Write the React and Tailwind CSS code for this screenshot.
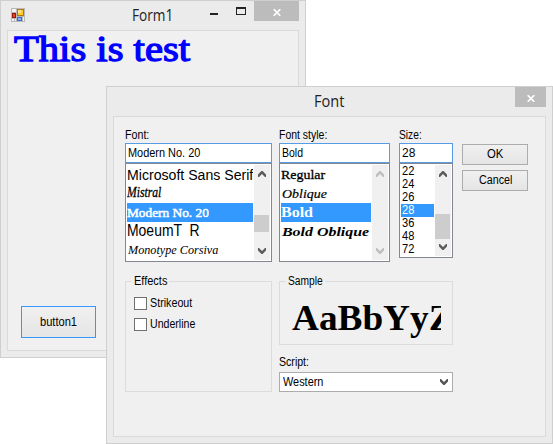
import { useLayoutEffect, useRef } from 'react';

// Text squeezed or stretched horizontally to an exact width.
function Fit({ w, className = '', children }) {
  const ref = useRef(null);
  useLayoutEffect(() => {
    const el = ref.current;
    el.style.transform = `scaleX(${w / el.offsetWidth})`;
  }, [w]);
  return (
    <span className="block overflow-visible whitespace-nowrap" style={{ width: w }}>
      <span ref={ref} className={`inline-block origin-left whitespace-pre align-top ${className}`}>{children}</span>
    </span>
  );
}

function Chevron({ up, color }) {
  return (
    <svg width="8" height="6" viewBox="0 0 8 6" className={up ? 'rotate-180' : ''}>
      <path d="M0 0 H1 L4 2.9 L7 0 H8 V2.6 L4.6 6 H3.4 L0 2.6 Z" fill={color} />
    </svg>
  );
}

function Close({ className }) {
  return (
    <div className={`flex h-5 items-center justify-center bg-[#bcbcbc] pt-[2px] ${className}`}>
      <svg width="8" height="7" viewBox="0 0 8 7">
        <path d="M0.7 0.2 L7.3 6.8 M7.3 0.2 L0.7 6.8" stroke="#fff" strokeWidth="1.7" />
      </svg>
    </div>
  );
}

function ScrollBar({ disabled, thumb }) {
  const c = disabled ? '#bfbfbf' : '#5c5c5c';
  return (
    <div className="flex w-4 shrink-0 flex-col items-start bg-[#f0f0f0]">
      <div className="flex h-[18px] w-4 items-center justify-center"><Chevron up color={c} /></div>
      <div className="w-[15px] flex-1">{thumb && <div className={`bg-[#cdcdcd] ${thumb}`} />}</div>
      <div className="flex h-[18px] w-4 items-center justify-center"><Chevron color={c} /></div>
    </div>
  );
}

function Field({ label, labelW, value, valueW, className, children }) {
  return (
    <div className={className}>
      <div className="h-[14px]"><Fit w={labelW}>{label}</Fit></div>
      <div className="h-5 border border-[#569de5] bg-white pt-[3px] pl-[2px]">
        <Fit w={valueW}>{value}</Fit>
      </div>
      {children}
    </div>
  );
}

function Row({ selected, w, className = '', pad = 'pl-0', children }) {
  return (
    <div className={`h-[19px] ${pad} ${selected ? 'bg-[#3399ff] text-white' : ''}`}>
      <Fit w={w} className={`h-[19px] ${className}`}>{children}</Fit>
    </div>
  );
}

function Group({ title, titleW, className, children }) {
  return (
    <div className={`relative border border-[#dcdcdc] ${className}`}>
      <div className="absolute -top-[7px] left-[6px] bg-[#f0f0f0] px-[2px]"><Fit w={titleW}>{title}</Fit></div>
      {children}
    </div>
  );
}

function Check({ label, w }) {
  return (
    <div className="flex h-[13px] items-center gap-[3px]">
      <div className="size-[13px] border border-[#707070] bg-white" />
      <Fit w={w}>{label}</Fit>
    </div>
  );
}

function Button({ label, w, className }) {
  return (
    <button className={`flex items-center justify-center border bg-linear-to-b from-[#f0f0f0] to-[#e5e5e5] ${className}`}>
      <Fit w={w}>{label}</Fit>
    </button>
  );
}

function FormIcon() {
  return (
    <svg width="14" height="14" viewBox="0 0 14 14" shapeRendering="crispEdges">
      <rect width="14" height="14" fill="#b9b9b9" />
      <path d="M1 1h4v3H1z M1 11h2v2H1z M4 11h1v2H4z M12 9h1v4h-1z" fill="#f3f3f3" />
      <rect x="1" y="5" width="4" height="5" fill="#9e1608" />
      <rect x="2" y="6" width="2" height="3" fill="#e8442c" />
      <rect x="6" y="1" width="7" height="7" fill="#b07a0c" />
      <rect x="7" y="2" width="5" height="5" fill="#ffc92e" />
      <rect x="7" y="2" width="3" height="3" fill="#ffe38a" />
      <rect x="6" y="9" width="5" height="4" fill="#356fc9" />
      <rect x="7" y="10" width="3" height="2" fill="#8ab5f5" />
    </svg>
  );
}

export default function App() {
  return (
    <div className="relative h-[444px] w-[553px] overflow-hidden bg-white font-['Liberation_Sans',Arial,sans-serif] text-[12px] leading-[13px] text-black">
      <section className="absolute top-0 left-0 flex h-[358px] w-[306px] flex-col border border-[#cfcfcf] bg-[#ebebeb] px-[6px] pb-[6px]">
        <header className="flex h-[29px] shrink-0 items-start">
          <div className="pt-[7px] pl-1"><FormIcon /></div>
          <div className="pt-[3px] pl-[107px]">
            <Fit w={41} className="font-['Open_Sans',sans-serif] text-[16px] leading-[22px] text-[#222]">Form1</Fit>
          </div>
          <div className="mt-[12px] ml-[37px] h-[2px] w-2 bg-[#222]" />
          <div className="mt-[6px] ml-[18px] h-2 w-[10px] border border-t-2 border-[#222]" />
          <Close className="ml-2 w-[45px]" />
        </header>
        <div className="flex flex-1 flex-col justify-between border border-[#dadada] bg-[#f0f0f0]">
          <div className="pl-[6px]">
            <Fit w={176} className="font-['Liberation_Serif',serif] text-[36px] leading-[37px] text-[#0000ff] [-webkit-text-stroke:1.3px_#0000ff]">This is test</Fit>
          </div>
          <div className="pb-[12px] pl-[13px]">
            <Button label="button1" w={37} className="h-8 w-[75px] border-[#3399ff]" />
          </div>
        </div>
      </section>

      <section className="absolute top-[86px] left-[106px] flex h-[358px] w-[447px] flex-col border border-[#cfcfcf] bg-[#ebebeb] px-[6px] pb-[6px]">
        <header className="flex h-[29px] shrink-0 items-start justify-between">
          <div className="pt-[3px] pl-[201px]">
            <Fit w={30} className="font-['Open_Sans',sans-serif] text-[16px] leading-[22px] text-[#222]">Font</Fit>
          </div>
          <Close className="w-[31px]" />
        </header>
        <div className="flex-1 border border-[#dadada] bg-[#f0f0f0] pt-3 pl-[11px]">
          <div className="flex items-start">
            <Field label="Font:" labelW={24} value="Modern No. 20" valueW={72} className="w-[147px]">
              <div className="flex h-[99px] border border-[#828790] bg-white p-px">
                <div className="mr-px flex-1 overflow-hidden">
                  <Row w={126} className="text-[14px] leading-[20px]">Microsoft Sans Serif</Row>
                  <Row w={34} className="font-['Liberation_Serif',serif] text-[14px] leading-[17px] italic [-webkit-text-stroke:0.3px]">Mistral</Row>
                  <Row selected w={82} className="font-['Liberation_Serif',serif] text-[13px] leading-[19px] [-webkit-text-stroke:0.5px]">Modern No. 20</Row>
                  <Row w={73} className="text-[17px] leading-[17px]">MoeumT  R</Row>
                  <Row w={90} pad="pl-px" className="font-['Liberation_Serif',serif] text-[13px] leading-[18px] italic">Monotype Corsiva</Row>
                </div>
                <ScrollBar thumb="mt-[32px] h-[17px]" />
              </div>
            </Field>
            <Field label="Font style:" labelW={48} value="Bold" valueW={21} className="ml-[7px] w-[111px]">
              <div className="flex h-[99px] border border-[#828790] bg-white p-px">
                <div className="mr-px flex-1 overflow-hidden">
                  <Row w={44} className="font-['Liberation_Serif',serif] text-[13px] leading-[19px] [-webkit-text-stroke:0.3px]">Regular</Row>
                  <Row w={45} pad="pl-px" className="font-['Liberation_Serif',serif] text-[13px] leading-[19px] italic [-webkit-text-stroke:0.2px]">Oblique</Row>
                  <Row selected w={32} className="font-['Liberation_Serif',serif] text-[14px] leading-[19px] font-bold">Bold</Row>
                  <Row w={87} pad="pl-px" className="font-['Liberation_Serif',serif] text-[13px] leading-[19px] font-bold italic">Bold Oblique</Row>
                </div>
                <ScrollBar disabled />
              </div>
            </Field>
            <Field label="Size:" labelW={23} value="28" valueW={13} className="ml-[9px] w-[54px]">
              <div className="flex h-[95px] border border-[#828790] bg-white p-px">
                <div className="mr-px flex-1">
                  {['22', '24', '26', '28', '36', '48', '72'].map((s) => (
                    <div key={s} className={`h-[13px] pl-px ${s === '28' ? 'bg-[#3399ff] text-white' : ''}`}>
                      <Fit w={12}>{s}</Fit>
                    </div>
                  ))}
                </div>
                <ScrollBar thumb="mt-[31px] h-[25px]" />
              </div>
            </Field>
            <div className="mt-[15px] ml-[9px] flex flex-col gap-[5px]">
              <Button label="OK" w={16} className="h-[21px] w-[66px] border-[#acacac]" />
              <Button label="Cancel" w={33} className="h-[21px] w-[66px] border-[#acacac]" />
            </div>
          </div>
          <div className="mt-[19px] flex gap-[7px]">
            <Group title="Effects" titleW={33} className="flex h-[111px] w-[147px] flex-col gap-2 pt-[15px] pl-2">
              <Check label="Strikeout" w={42} />
              <Check label="Underline" w={45} />
            </Group>
            <div className="w-[174px]">
              <Group title="Sample" titleW={35} className="h-16 pt-[17px] pl-3">
                <div className="h-[42px] w-[149px] overflow-hidden">
                  <Fit w={178} className="font-['Liberation_Serif',serif] text-[36px] leading-[38px] font-bold">AaBbYyZz</Fit>
                </div>
              </Group>
              <div className="mt-[11px] h-4"><Fit w={30}>Script:</Fit></div>
              <div className="flex h-5 items-center justify-between border border-[#acacac] bg-white pr-1 pl-[3px]">
                <Fit w={40}>Western</Fit>
                <Chevron color="#555" />
              </div>
            </div>
          </div>
        </div>
      </section>
    </div>
  );
}
